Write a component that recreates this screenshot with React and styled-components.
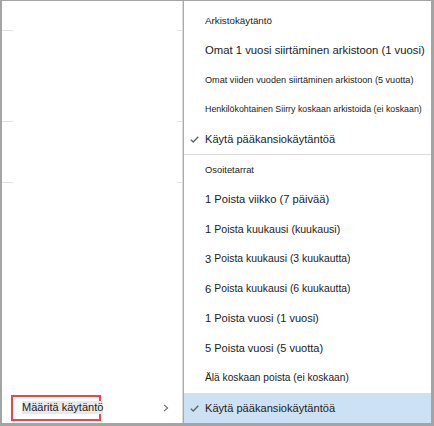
import React from "react";
import styled, { createGlobalStyle } from "styled-components";

const Global = createGlobalStyle`
  html, body { margin: 0; padding: 0; background: #fff; }
  body { font-family: "Liberation Sans", Arial, sans-serif; color: #1b1b1b; }
  * { box-sizing: border-box; }
`;

const Frame = styled.div`
  width: 434px;
  height: 426px;
  border-style: solid;
  border-color: #a4a4a4;
  border-width: 1px 3px 3px 2px;
  display: flex;
  background: #fff;
  overflow: hidden;
`;

const LeftPane = styled.div`
  width: 181px;
  flex: none;
  display: flex;
  flex-direction: column;
`;

const SepRow = styled.div`
  height: 1px;
  margin-top: ${(p) => p.$top}px;
  display: flex;
  justify-content: space-between;
`;

const SepBit = styled.span`
  display: block;
  width: ${(p) => p.$w}px;
  height: 1px;
  background: #e3e3e3;
`;

const PolicyRow = styled.div`
  margin-top: auto;
  height: 29px;
  display: flex;
  align-items: center;
  padding: 0 14px 0 9px;
  margin-bottom: 1px;
`;

const Highlight = styled.div`
  height: 26px;
  width: 90px;
  border: 2px solid #e8474c;
  display: flex;
  align-items: center;
  padding-left: 9px;
  white-space: nowrap;
`;

const PolicyText = styled.span`
  font-size: 11px;
  background: #e9e9e9;
  line-height: 13px;
  color: #1b1b1b;
`;

const Chevron = styled.svg`
  margin-left: auto;
  width: 6px;
  height: 8px;
`;

const Menu = styled.div`
  flex: 1;
  border-left: 1px solid #a9a9a9;
  box-shadow: -1px 0 0 #dcdcdc;
  display: flex;
  flex-direction: column;
  padding-top: 5px;
`;

const Section = styled.div`
  display: flex;
  flex-direction: column;
`;

const Divider = styled.div`
  height: 1px;
  background: #dedede;
`;

const Item = styled.div`
  height: ${(p) => p.$h}px;
  display: flex;
  align-items: center;
  padding-left: 21px;
  position: relative;
  white-space: nowrap;
  background: ${(p) => (p.$active ? "#cce2f4" : "transparent")};
  font-size: ${(p) => p.$size}px;
  color: #1b1b1b;
`;

const Check = styled.svg`
  position: absolute;
  left: 6px;
  top: 50%;
  margin-top: -3px;
  width: 9px;
  height: 7px;
`;

const Num = styled.span`
  font-size: 11.2px;
  margin-right: 3px;
`;

const Rest = styled.span`
  font-size: ${(p) => p.$size}px;
`;

const CheckIcon = () => (
  <Check viewBox="0 0 9 7">
    <polyline points="0.8,3.6 3.2,6 8.3,0.8" fill="none" stroke="#606060" strokeWidth="1.3" />
  </Check>
);

const sec1 = [
  { t: "Arkistokäytäntö", s: 9.8 },
  { t: "Omat 1 vuosi siirtäminen arkistoon (1 vuosi)", s: 11.3 },
  { t: "Omat viiden vuoden siirtäminen arkistoon (5 vuotta)", s: 9.15 },
  { t: "Henkilökohtainen Siirry koskaan arkistoida (ei koskaan)", s: 8.85 },
  { t: "Käytä pääkansiokäytäntöä", s: 11.1, check: true },
];

const sec2 = [
  { t: "Osoitetarrat", s: 9.4 },
  { n: "1", t: "Poista viikko (7 päivää)", s: 11.2 },
  { n: "1", t: "Poista kuukausi (kuukausi)", s: 10.6 },
  { n: "3", t: "Poista kuukausi (3 kuukautta)", s: 10.4 },
  { n: "6", t: "Poista kuukausi (6 kuukautta)", s: 10.4 },
  { n: "1", t: "Poista vuosi (1 vuosi)", s: 11 },
  { n: "5", t: "Poista vuosi (5 vuotta)", s: 11 },
  { t: "Älä koskaan poista (ei koskaan)", s: 10.2 },
  { t: "Käytä pääkansiokäytäntöä", s: 11.1, check: true, active: true },
];

const renderItem = (it, h, i) => (
  <Item key={i} $h={h} $size={it.s} $active={it.active}>
    {it.check && <CheckIcon />}
    {it.n && <Num>{it.n}</Num>}
    {it.n ? <Rest $size={it.s}>{it.t}</Rest> : it.t}
  </Item>
);

export default function App() {
  return (
    <>
      <Global />
      <Frame>
        <LeftPane>
          <SepRow $top={29}>
            <SepBit $w={11} />
            <SepBit $w={6} />
          </SepRow>
          <SepRow $top={90}>
            <SepBit $w={11} />
            <SepBit $w={6} />
          </SepRow>
          <SepRow $top={60}>
            <SepBit $w={11} />
            <SepBit $w={6} />
          </SepRow>
          <PolicyRow>
            <Highlight>
              <PolicyText>Määritä käytäntö</PolicyText>
            </Highlight>
            <Chevron viewBox="0 0 6 8">
              <polyline points="1,0.8 4.6,4 1,7.2" fill="none" stroke="#6a6a6a" strokeWidth="1.1" />
            </Chevron>
          </PolicyRow>
        </LeftPane>
        <Menu>
          <Section>{sec1.map((it, i) => renderItem(it, 29.5, i))}</Section>
          <Divider />
          <Section>{sec2.map((it, i) => renderItem(it, 29.8, i))}</Section>
        </Menu>
      </Frame>
    </>
  );
}
